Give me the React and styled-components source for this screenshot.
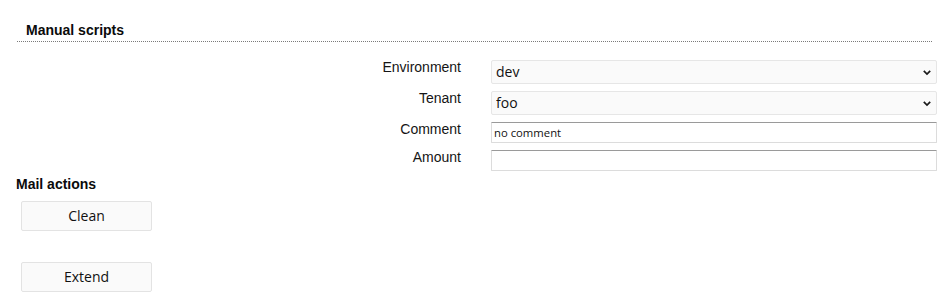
import React from "react";
import styled, { createGlobalStyle } from "styled-components";

const Global = createGlobalStyle`
  html, body { margin: 0; padding: 0; background: #fff; }
  body { font-family: "Liberation Sans", Arial, sans-serif; color: #111; }
`;

const Page = styled.div`
  width: 948px;
  padding-top: 22px;
`;

const SectionTitle = styled.h2`
  margin: 0 16px 0 17px;
  padding: 0 0 3px 9px;
  font-size: 14px;
  line-height: 16px;
  font-weight: bold;
  color: #0b0b0b;
  border-bottom: 1px dotted #7a7a7a;
`;

const Form = styled.div`
  display: grid;
  grid-template-columns: 444px 446px;
  column-gap: 30px;
  row-gap: 7px;
  margin: 18px 0 0 17px;
`;

const Label = styled.label`
  text-align: right;
  font-size: 14px;
  line-height: 16px;
  margin-top: -1px;
  color: #151515;
`;

const SelectWrap = styled.div`
  position: relative;
  height: 24px;
`;

const Select = styled.select`
  box-sizing: border-box;
  width: 100%;
  height: 24px;
  margin: 0;
  padding: 0 20px 2px 4px;
  font-family: "Open Sans", sans-serif;
  font-size: 14px;
  color: #111;
  background: #fafafa;
  border: 1px solid #e6e6e6;
  border-radius: 2px;
  outline: none;
  appearance: none;
  -webkit-appearance: none;
`;

const Chevron = styled.svg`
  position: absolute;
  right: 6px;
  top: 9px;
  width: 8px;
  height: 7px;
  pointer-events: none;
`;

const Input = styled.input`
  box-sizing: border-box;
  width: 100%;
  height: 21px;
  margin: 0;
  padding: 0 2px;
  font-family: "Open Sans", sans-serif;
  font-size: 11.3px;
  color: #111;
  background: #fff;
  border: 1px solid #dcdcdc;
  border-top-color: #9a9a9a;
  border-radius: 1px;
  outline: none;
`;

const SubTitle = styled.h3`
  margin: 5px 0 0 16px;
  font-size: 14px;
  line-height: 16px;
  font-weight: bold;
  color: #0b0b0b;
`;

const Actions = styled.div`
  display: flex;
  flex-direction: column;
  align-items: flex-start;
  gap: 31px;
  margin: 9px 0 0 21px;
`;

const Button = styled.button`
  box-sizing: border-box;
  width: 131px;
  height: 30px;
  margin: 0;
  padding: 0 0 2px;
  font-family: "Open Sans", sans-serif;
  font-size: 14px;
  color: #111;
  background: #fafafa;
  border: 1px solid #e3e3e3;
  border-radius: 2px;
  cursor: pointer;
`;

function Dropdown({ value, options }) {
  return (
    <SelectWrap>
      <Select defaultValue={value}>
        {options.map((o) => (
          <option key={o} value={o}>
            {o}
          </option>
        ))}
      </Select>
      <Chevron viewBox="0 0 8 7">
        <path d="M0.8 1.8 L4 5 L7.2 1.8" fill="none" stroke="#1a1a1a" strokeWidth="1.7" />
      </Chevron>
    </SelectWrap>
  );
}

export default function App() {
  return (
    <Page>
      <Global />
      <SectionTitle>Manual scripts</SectionTitle>
      <Form>
        <Label>Environment</Label>
        <Dropdown value="dev" options={["dev", "prod"]} />
        <Label>Tenant</Label>
        <Dropdown value="foo" options={["foo", "bar"]} />
        <Label>Comment</Label>
        <Input defaultValue="no comment" />
        <Label>Amount</Label>
        <Input defaultValue="" />
      </Form>
      <SubTitle>Mail actions</SubTitle>
      <Actions>
        <Button>Clean</Button>
        <Button>Extend</Button>
      </Actions>
    </Page>
  );
}
